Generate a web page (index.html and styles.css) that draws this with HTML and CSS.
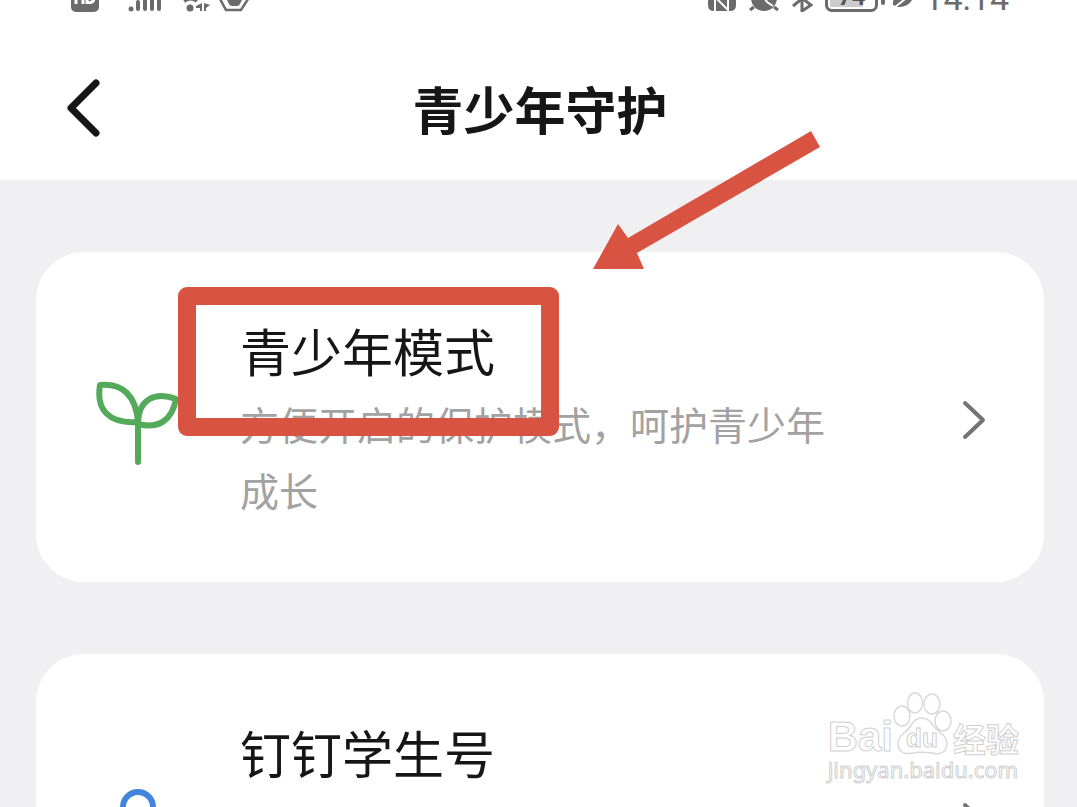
FILE: index.html
```html
<!DOCTYPE html>
<html lang="zh-CN">

<head>
  <meta charset="UTF-8">
  <meta name="viewport" content="width=device-width, initial-scale=1.0">
  <title>青少年守护</title>
  <link rel="stylesheet" href="styles.css">
</head>

<body>
  <div class="page">
    <div class="status-bar">
      <div class="status-left">
        <svg class="hd" width="30" height="24" viewBox="0 0 30 24">
          <rect x="1" y="-4" width="28" height="28" rx="5" fill="#6b6b6b" />
          <path d="M6 2V16M13 2V16M6 10H13M17 2V14.500H20Q24 14.500 24 9" fill="none" stroke="#fff" stroke-width="3" />
        </svg>
        <svg class="signal" width="34" height="24" viewBox="0 0 34 24">
          <path d="M10 14V21M17 10V21M24 6V21M31 2V21" stroke="#6b6b6b" stroke-width="4" stroke-linecap="round" />
          <circle cx="3" cy="21" r="2.5" fill="#6b6b6b" />
        </svg>
        <svg class="wifi" width="28" height="24" viewBox="0 0 28 24">
          <path d="M2 13Q9 8 15 13" fill="none" stroke="#6b6b6b" stroke-width="4" />
          <circle cx="8" cy="20" r="3.5" fill="#6b6b6b" />
          <path d="M20 15V23H18V20H14V18ZM22 15V23H24V20L28 17Z" fill="#6b6b6b" />
        </svg>
        <svg class="hexagon" width="32" height="24" viewBox="0 0 32 24">
          <path d="M2 11L8 22H23L30 11" fill="none" stroke="#6b6b6b" stroke-width="2.500" />
          <path d="M7 8L11 16Q12 18 14 18H19Q21 18 22 16L26 8Z" fill="#6b6b6b" />
        </svg>
      </div>
      <div class="status-right">
        <svg width="30" height="24" viewBox="0 0 30 24">
          <path d="M7 0H23Q29 0 29 6V17Q29 23 23 23H7Q1 23 1 17V6Q1 0 7 0Z" fill="#6b6b6b" />
          <path d="M8 24V9L21 22V0" fill="none" stroke="#fff" stroke-width="2" />
        </svg>
        <svg width="30" height="24" viewBox="0 0 30 24">
          <circle cx="15" cy="10" r="13" fill="#6b6b6b" />
          <path d="M5 19L1 22M25 19L29 22" stroke="#6b6b6b" stroke-width="3" />
          <path d="M14 8L18 14L24 18" fill="none" stroke="#fff" stroke-width="2" />
        </svg>
        <svg width="22" height="24" viewBox="0 0 22 24">
          <path d="M2 18L18 5L11 -2V23L20 17L3 4" fill="none" stroke="#6b6b6b" stroke-width="3" />
        </svg>
        <div class="battery">74</div>
        <svg class="leaf" width="26" height="24" viewBox="0 0 26 24">
          <path d="M3 17Q2 8 12 4L26 2Q22 20 8 19Z" fill="#6b6b6b" />
          <path d="M4 20L20 7" stroke="#fff" stroke-width="2" />
        </svg>
        <span class="time">14:14</span>
      </div>
    </div>

    <header class="header">
      <button class="back" type="button" aria-label="返回">
        <svg width="36" height="60" viewBox="0 0 36 60">
          <path d="M29 5L4 30L29 55" fill="none" stroke="#161616" stroke-width="7" stroke-linecap="round" stroke-linejoin="round" />
        </svg>
      </button>
      <h1>青少年守护</h1>
    </header>

    <main class="list">
      <a class="card" href="#">
        <svg class="card-icon" width="84" height="96" viewBox="0 0 84 96">
          <g fill="none" stroke="#53aa5b" stroke-width="6" stroke-linecap="round" stroke-linejoin="round">
            <path d="M42 54V93" />
            <path d="M42 53C40 27 27 14 4 16C0 40 12 55 42 53Z" />
            <path d="M42 53C43 31 58 22 80 30C76 52 62 60 42 55" />
          </g>
        </svg>
        <div class="card-text">
          <h2>青少年模式</h2>
          <p>方便开启的保护模式，呵护青少年成长</p>
        </div>
        <svg class="chevron" width="24" height="46" viewBox="0 0 24 46">
          <path d="M3 9L21 26L3 43" fill="none" stroke="#747474" stroke-width="4" stroke-linecap="round" stroke-linejoin="round" />
        </svg>
        <span class="highlight"></span>
      </a>

      <a class="card" href="#">
        <svg class="card-icon" width="84" height="96" viewBox="0 0 84 96">
          <g fill="none" stroke="#4285dc" stroke-width="6" stroke-linecap="round">
            <circle cx="42" cy="36" r="15" />
            <path d="M12 92C14 50 70 50 72 92" />
          </g>
        </svg>
        <div class="card-text">
          <h2>钉钉学生号</h2>
        </div>
        <svg class="chevron" width="24" height="46" viewBox="0 0 24 46">
          <path d="M3 9L21 26L3 43" fill="none" stroke="#747474" stroke-width="4" stroke-linecap="round" stroke-linejoin="round" />
        </svg>
      </a>
    </main>

    <svg class="arrow" width="228" height="140" viewBox="0 0 228 140">
      <path d="M0 139L25 94L35 108L218 1L227 17L44 123L51 139Z" fill="#d85341" />
    </svg>

    <div class="watermark">
      <div class="brand">
        <span class="bai">Bai</span>
        <svg width="60" height="64" viewBox="0 0 60 64">
          <g fill="#fff" stroke="#d9d9d9" stroke-width="1.5">
            <ellipse cx="9" cy="25" rx="8" ry="10" />
            <ellipse cx="22" cy="12" rx="7.5" ry="10" />
            <ellipse cx="39" cy="13" rx="8" ry="10" />
            <ellipse cx="50" cy="30" rx="8" ry="10" />
            <path d="M29 27C36 27 39 33 43 38C49 43 54 46 54 53C53 62 47 64 39 62C32 61 26 61 20 62C10 64 5 60 5 52C5 45 12 42 16 37C20 32 22 27 29 27Z" />
          </g>
          <text class="du" x="29" y="56" text-anchor="middle">du</text>
        </svg>
        <span class="jingyan">经验</span>
      </div>
      <div class="site">jingyan.baidu.com</div>
    </div>
  </div>
</body>

</html>
```
FILE: styles.css
```css
* {
  box-sizing: border-box;
}

body {
  margin: 0;
  font-family: "Noto Sans CJK SC", sans-serif;
  background-color: #f0f0f2;
  color: #161616;
}

.page {
  position: relative;
  height: 100vh;
  overflow: hidden;
}

.status-bar {
  display: flex;
  justify-content: space-between;
  align-items: flex-end;
  height: 12px;
  padding: 0 68px 0 70px;
  overflow: hidden;
  background-color: #fff;
}

.status-left,
.status-right {
  display: flex;
  align-items: flex-end;
}

.status-left {
  gap: 8px;
}

.status-right {
  gap: 12px;
}

.signal {
  margin-left: 20px;
}

.wifi {
  margin-left: 12px;
}

.battery {
  position: relative;
  width: 53px;
  height: 30px;
  border: 3px solid #6b6b6b;
  border-radius: 7px;
  background: linear-gradient(to right, #ccc 74%, #fff 74%);
  box-shadow: inset 0 0 0 2px #fff;
  color: #555;
  font: bold 24px/24px Roboto, sans-serif;
  text-align: center;
}

.battery::after {
  content: "";
  position: absolute;
  right: -10px;
  top: 8px;
  width: 4px;
  height: 12px;
  border-radius: 2px;
  background-color: #6b6b6b;
}

.leaf {
  margin-right: -4px;
}

.time {
  color: #6b6b6b;
  font: 34px/28px Roboto, sans-serif;
}

.header {
  display: flex;
  align-items: center;
  height: 168px;
  padding: 24px 64px 0 67px;
  background-color: #fff;
}

.back {
  width: 36px;
  height: 60px;
  padding: 0;
  border: none;
  background: none;
  cursor: pointer;
}

.back svg {
  display: block;
}

.header h1 {
  flex: 1;
  margin: 0 36px 0 0;
  font-size: 51px;
  line-height: 72px;
  font-weight: bold;
  text-align: center;
}

.list {
  display: flex;
  flex-direction: column;
  gap: 72px;
  padding: 72px 33px 72px 36px;
}

.card {
  position: relative;
  display: flex;
  align-items: center;
  gap: 60px;
  min-height: 330px;
  padding: 58px 58px 58px 60px;
  border-radius: 48px;
  background-color: #fff;
  color: #161616;
  text-decoration: none;
}

.card-icon,
.chevron {
  flex-shrink: 0;
}

.card-text {
  flex: 1;
  align-self: flex-start;
}

.card-text h2 {
  margin: 0;
  font-size: 51px;
  line-height: 80px;
  font-weight: normal;
}

.card-text p {
  max-width: 600px;
  margin: 0;
  color: #a2a2a2;
  font-size: 39px;
  line-height: 66px;
}

/* red frame around the first option */
.highlight {
  position: absolute;
  left: 142px;
  top: 35px;
  width: 381px;
  height: 149px;
  border: 18px solid #d85341;
  border-radius: 9px;
}

.arrow {
  position: absolute;
  left: 593px;
  top: 130px;
}

.watermark {
  position: absolute;
  right: 58px;
  bottom: 24px;
  color: #fff;
  -webkit-text-stroke: 1px #d0d0d0;
}

.brand {
  display: flex;
  align-items: flex-end;
}

.bai {
  font: bold 42px/36px "Liberation Sans", sans-serif;
}

.du {
  fill: #fff;
  stroke: #d0d0d0;
  font: bold 26px "Liberation Sans", sans-serif;
}

.jingyan {
  font-size: 33px;
  line-height: 34px;
  font-weight: bold;
}

.site {
  font: 22px/28px "Noto Sans", sans-serif;
}
```
